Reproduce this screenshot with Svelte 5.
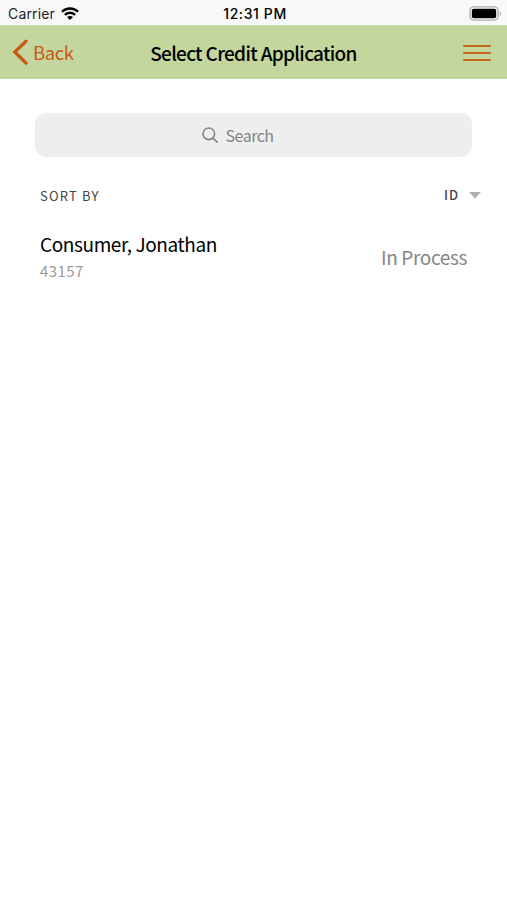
<script>
    let query = "";
    let applications = [
        { id: "43157", name: "Consumer, Jonathan", status: "In Process" },
    ];

    $: filtered = applications.filter((item) =>
        item.name.toLowerCase().includes(query.toLowerCase())
    );
</script>

<div class="screen">
    <div class="status-bar">
        <div class="carrier">
            <span>Carrier</span>
            <svg width="18" height="13" viewBox="0 0 18 13">
                <g fill="none" stroke="#000" stroke-width="2.3">
                    <path d="M1 4.8C5.4 .4 12.6 .4 17 4.8" />
                    <path d="M3.8 7.9C6.7 5 11.3 5 14.2 7.9" />
                </g>
                <path d="M9 13L6 10.1C7.7 8.5 10.3 8.5 12 10.1Z" />
            </svg>
        </div>
        <span class="time">12:31 PM</span>
        <svg class="battery" width="33" height="15" viewBox="0 0 33 15">
            <rect x=".9" y=".9" width="28.2" height="13.2" rx="4" fill="#fff" stroke="#aaa" stroke-width="1.3" />
            <rect x="2.8" y="2.8" width="24.4" height="9.4" rx="2" />
            <path d="M30.6 5.2C32.5 6 32.5 9 30.6 9.8Z" fill="#aaa" />
        </svg>
    </div>

    <header>
        <button class="btn-back">
            <svg width="17" height="27" viewBox="0 0 17 27">
                <path d="M14 2.3L2.8 13L14 24" fill="none" stroke="#cb5a12" stroke-width="3.3" stroke-linecap="round" />
            </svg>
            <span>Back</span>
        </button>
        <h1>Select Credit Application</h1>
        <button class="btn-menu" aria-label="Menu">
            <i></i>
            <i></i>
            <i></i>
        </button>
    </header>

    <main>
        <label class="search">
            <svg width="17" height="17" viewBox="0 0 17 17">
                <g fill="none" stroke="#858585" stroke-width="1.6" stroke-linecap="round">
                    <circle cx="6.8" cy="6.8" r="5.8" />
                    <path d="M11.1 11.1L15.2 15.1" />
                </g>
            </svg>
            <input placeholder="Search" bind:value={query} />
        </label>

        <div class="sort">
            <span class="sort-label">SORT BY</span>
            <button class="sort-value">
                <span>ID</span>
                <svg width="12" height="7" viewBox="0 0 12 7">
                    <path d="M0 0H12L6 6.5Z" fill="#b0b0b0" />
                </svg>
            </button>
        </div>

        {#each filtered as item}
            <div class="application">
                <div>
                    <p class="name">{item.name}</p>
                    <p class="number">{item.id}</p>
                </div>
                <span class="state">{item.status}</span>
            </div>
        {/each}
    </main>
</div>

<style>
    :global(body) {
        background: #fff;
    }

    .screen {
        height: 900px;
        background: #fff;
        font-family: "Noto Sans CJK SC", "Open Sans", sans-serif;
        color: #000;
    }

    button {
        padding: 0;
        border: 0;
        background: none;
        font: inherit;
        cursor: pointer;
    }

    svg {
        display: block;
        flex: none;
    }

    .status-bar {
        display: grid;
        grid-template-columns: 1fr auto 1fr;
        align-items: center;
        box-sizing: border-box;
        height: 25px;
        padding: 2px 5px 0 8px;
        background: #f8f8f8;
        font: 14px/22px Inter, sans-serif;
    }

    .carrier {
        display: flex;
        align-items: center;
        gap: 6px;
        color: #222;
        letter-spacing: 0.15px;
    }

    .time {
        font-weight: 500;
        letter-spacing: 0.6px;
    }

    .battery {
        justify-self: end;
    }

    header {
        display: grid;
        grid-template-columns: 1fr auto 1fr;
        align-items: center;
        height: 54px;
        padding: 0 12px;
        background: #c2d69e;
    }

    .btn-back {
        display: flex;
        align-items: center;
        gap: 4px;
        color: #cb5a12;
        font-size: 18.5px;
        line-height: 27px;
        letter-spacing: -0.4px;
    }

    h1 {
        margin: 0;
        font-size: 19px;
        font-weight: 500;
        line-height: 27px;
        letter-spacing: -0.68px;
    }

    .btn-menu {
        display: flex;
        flex-direction: column;
        justify-self: end;
        gap: 4.5px;
        width: 28px;
        margin: 2px 4px 0 0;
    }

    .btn-menu i {
        height: 2.6px;
        border-radius: 1px;
        background: #c4661c;
    }

    main {
        padding: 34px 35px 0;
    }

    .search {
        display: flex;
        align-items: center;
        justify-content: center;
        gap: 7px;
        height: 44px;
        border-radius: 11px;
        background: #eee;
    }

    .search input {
        width: 80px;
        padding: 0;
        border: 0;
        outline: 0;
        background: none;
        font: 16px/24px "Noto Sans CJK SC", sans-serif;
        letter-spacing: -0.5px;
        color: #777;
    }

    .search input::placeholder {
        color: #858585;
    }

    .sort {
        display: flex;
        align-items: center;
        justify-content: space-between;
        height: 20px;
        margin: 28px -9px 0 5px;
        font-size: 13px;
        line-height: 20px;
        color: #444;
    }

    .sort-label {
        padding-top: 2px;
        letter-spacing: 1.15px;
    }

    .sort-value {
        display: flex;
        align-items: center;
        gap: 10px;
        color: #444;
        font-weight: 500;
        letter-spacing: 1px;
    }

    .application {
        display: flex;
        align-items: center;
        justify-content: space-between;
        margin: 25px 5px 0;
    }

    .application p {
        margin: 0;
    }

    .name {
        font-size: 19px;
        line-height: 28px;
        letter-spacing: -0.4px;
    }

    .application .number {
        font-size: 15px;
        line-height: 26px;
        letter-spacing: 0.4px;
        color: #9a9a9a;
    }

    .state {
        font-size: 19px;
        line-height: 28px;
        letter-spacing: -0.36px;
        color: #858585;
    }
</style>
